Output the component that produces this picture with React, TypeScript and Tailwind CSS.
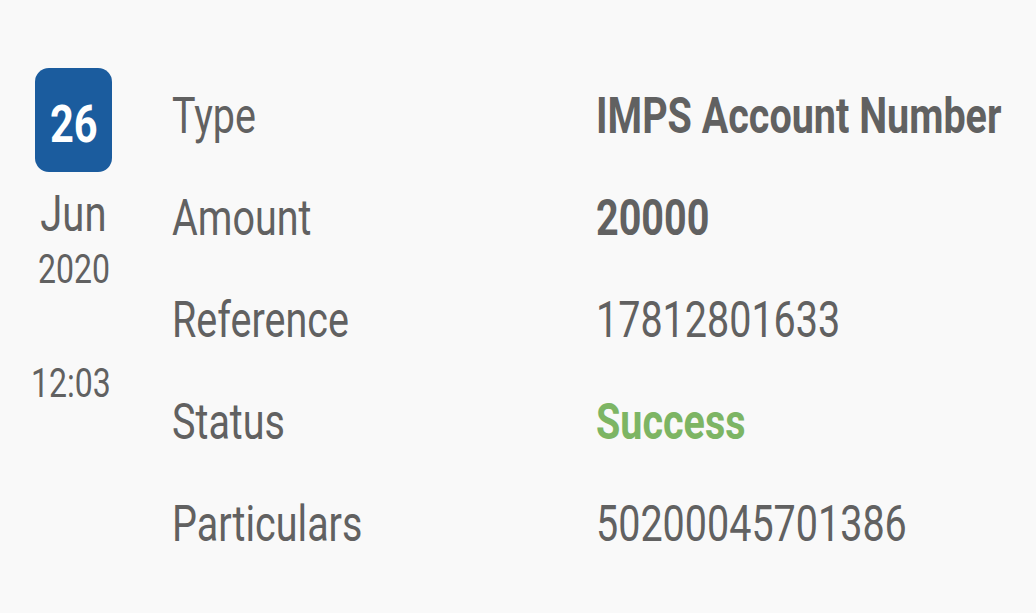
import React from "react";

const ROWS: { label: string; value: string; tone?: "bold" | "success" }[] = [
  { label: "Type", value: "IMPS Account Number", tone: "bold" },
  { label: "Amount", value: "20000", tone: "bold" },
  { label: "Reference", value: "17812801633" },
  { label: "Status", value: "Success", tone: "success" },
  { label: "Particulars", value: "50200045701386" },
];

export default function App() {
  return (
    <div className="w-[1036px] h-[613px] bg-[#f9f9f9] text-[#616161] font-['Roboto',sans-serif] flex overflow-hidden">
      {/* Date column */}
      <div className="w-[77px] ml-[35px] pt-[68px] flex flex-col items-center">
        <div className="w-[77px] h-[104px] rounded-[14px] bg-[#1b5c9e] flex items-center justify-center pt-[10px]">
          <span className="inline-block scale-x-[0.8] text-white font-bold text-[52px] leading-none">26</span>
        </div>
        <span className="inline-block scale-x-[0.8] text-[50px] leading-[50px] mt-[17px]">Jun</span>
        <span className="inline-block scale-x-[0.8] text-[40px] leading-[40px] mt-[11px]">2020</span>
        <span className="inline-block scale-x-[0.8] text-[40px] leading-[40px] mt-[74px] -ml-[6px]">12:03</span>
      </div>

      {/* Details */}
      <div className="ml-[60px] pt-[65px] flex flex-col">
        {ROWS.map((r) => (
          <div key={r.label} className="flex h-[102px] items-center text-[50px] leading-[102px]">
            <span className="w-[424px] shrink-0">
              <span className="inline-block origin-left scale-x-[0.79]">{r.label}</span>
            </span>
            <span
              className={[
                "inline-block origin-left scale-x-[0.79] whitespace-nowrap",
                r.tone === "bold" ? "font-bold" : "",
                r.tone === "success" ? "font-bold text-[#7db564]" : "",
              ].join(" ")}
            >
              {r.value}
            </span>
          </div>
        ))}
      </div>
    </div>
  );
}
